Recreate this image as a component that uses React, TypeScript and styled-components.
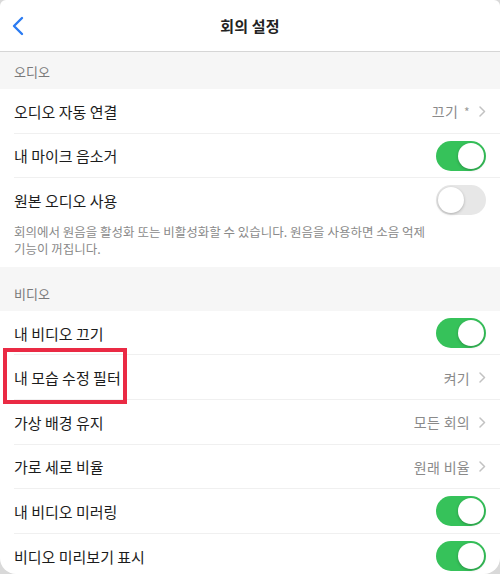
import styled, { createGlobalStyle } from "styled-components";

const GlobalStyle = createGlobalStyle`
  html, body {
    margin: 0;
    padding: 0;
    background: #d9d9d9;
  }
  body {
    font-family: "Noto Sans CJK KR", "Noto Sans", sans-serif;
    -webkit-font-smoothing: antialiased;
  }
`;

const Screen = styled.div`
  width: 500px;
  height: 574px;
  overflow: hidden;
  background: #ffffff;
  border-radius: 6px 6px 16px 16px;
  color: #1f1f1f;
`;

const Header = styled.div`
  position: relative;
  height: 52px;
  display: flex;
  align-items: center;
  justify-content: center;
  border-bottom: 1px solid #d6d6d6;
  box-sizing: border-box;
`;

const BackButton = styled.div`
  position: absolute;
  left: 10px;
  top: 15px;
  width: 16px;
  height: 22px;
  display: flex;
  align-items: center;
  justify-content: center;
`;

const Title = styled.div`
  font-size: 15px;
  font-weight: 700;
  color: #222;
  letter-spacing: 0.2px;
`;

const SectionHeader = styled.div<{ $height: number }>`
  height: ${(p) => p.$height}px;
  background: #f6f6f6;
  display: flex;
  align-items: flex-end;
  padding: 0 14px 8px;
  box-sizing: border-box;
  font-size: 13px;
  color: #7a7a7a;
`;

const Row = styled.div<{ $last?: boolean }>`
  position: relative;
  height: 44.6px;
  display: flex;
  align-items: center;
  justify-content: space-between;
  padding: 0 14px;
  box-sizing: border-box;
  &::after {
    content: "";
    display: ${(p) => (p.$last ? "none" : "block")};
    position: absolute;
    left: 14px;
    right: 0;
    bottom: 0;
    height: 1px;
    background: #f0f0f0;
  }
`;

const Label = styled.div`
  font-size: 15px;
  color: #1c1c1c;
`;

const Value = styled.div`
  display: flex;
  align-items: center;
  gap: 9px;
  font-size: 14px;
  color: #8a8a8a;
  letter-spacing: 0.3px;
`;

const Star = styled.span`
  font-size: 12px;
  color: #9a9a9a;
  margin-left: 3px;
`;

const Toggle = styled.div<{ $on: boolean }>`
  position: relative;
  width: 50px;
  height: 30px;
  border-radius: 15px;
  background: ${(p) => (p.$on ? "#36c25a" : "#e7e7e7")};
  &::after {
    content: "";
    position: absolute;
    top: 2px;
    left: ${(p) => (p.$on ? "22px" : "2px")};
    width: 26px;
    height: 26px;
    border-radius: 50%;
    background: #fff;
    box-shadow: 0 1px 3px rgba(0, 0, 0, 0.25);
  }
`;

const Description = styled.div`
  padding: 0 14px 10px;
  font-size: 12.5px;
  line-height: 17px;
  color: #8a8a8a;
`;

const Highlight = styled.div`
  position: absolute;
  z-index: 2;
  left: 3px;
  top: -7px;
  width: 124px;
  height: 56px;
  border: 4px solid #ea2a44;
  box-sizing: border-box;
  pointer-events: none;
`;

function Chevron() {
  return (
    <svg width="7" height="11" viewBox="0 0 7 11">
      <path d="M1 1 L5.5 5.5 L1 10" fill="none" stroke="#c2c2c2" strokeWidth="1.5" strokeLinecap="round" strokeLinejoin="round" />
    </svg>
  );
}

function Back() {
  return (
    <svg width="12" height="20" viewBox="0 0 12 20">
      <path d="M10 2 L2 10 L10 18" fill="none" stroke="#2b7bf2" strokeWidth="2.4" strokeLinecap="round" strokeLinejoin="round" />
    </svg>
  );
}

type Item = {
  label: string;
  value?: string;
  star?: boolean;
  toggle?: boolean;
  highlight?: boolean;
};

const audio: Item[] = [
  { label: "오디오 자동 연결", value: "끄기", star: true },
  { label: "내 마이크 음소거", toggle: true },
  { label: "원본 오디오 사용", toggle: false },
];

const video: Item[] = [
  { label: "내 비디오 끄기", toggle: true },
  { label: "내 모습 수정 필터", value: "켜기", highlight: true },
  { label: "가상 배경 유지", value: "모든 회의" },
  { label: "가로 세로 비율", value: "원래 비율" },
  { label: "내 비디오 미러링", toggle: true },
  { label: "비디오 미리보기 표시", toggle: true },
];

function SettingRow({ item, last }: { item: Item; last?: boolean }) {
  return (
    <Row $last={last}>
      {item.highlight && <Highlight />}
      <Label>{item.label}</Label>
      {item.value !== undefined ? (
        <Value>
          <span>
            {item.value}
            {item.star && <Star> *</Star>}
          </span>
          <Chevron />
        </Value>
      ) : (
        <Toggle $on={!!item.toggle} />
      )}
    </Row>
  );
}

export default function App() {
  return (
    <>
      <GlobalStyle />
      <Screen>
        <Header>
          <BackButton>
            <Back />
          </BackButton>
          <Title>회의 설정</Title>
        </Header>
        <SectionHeader $height={37}>오디오</SectionHeader>
        {audio.map((item, i) => (
          <SettingRow key={item.label} item={item} last={i === audio.length - 1} />
        ))}
        <Description>
          회의에서 원음을 활성화 또는 비활성화할 수 있습니다. 원음을 사용하면 소음 억제
          <br />
          기능이 꺼집니다.
        </Description>
        <SectionHeader $height={44}>비디오</SectionHeader>
        {video.map((item) => (
          <SettingRow key={item.label} item={item} />
        ))}
      </Screen>
    </>
  );
}
